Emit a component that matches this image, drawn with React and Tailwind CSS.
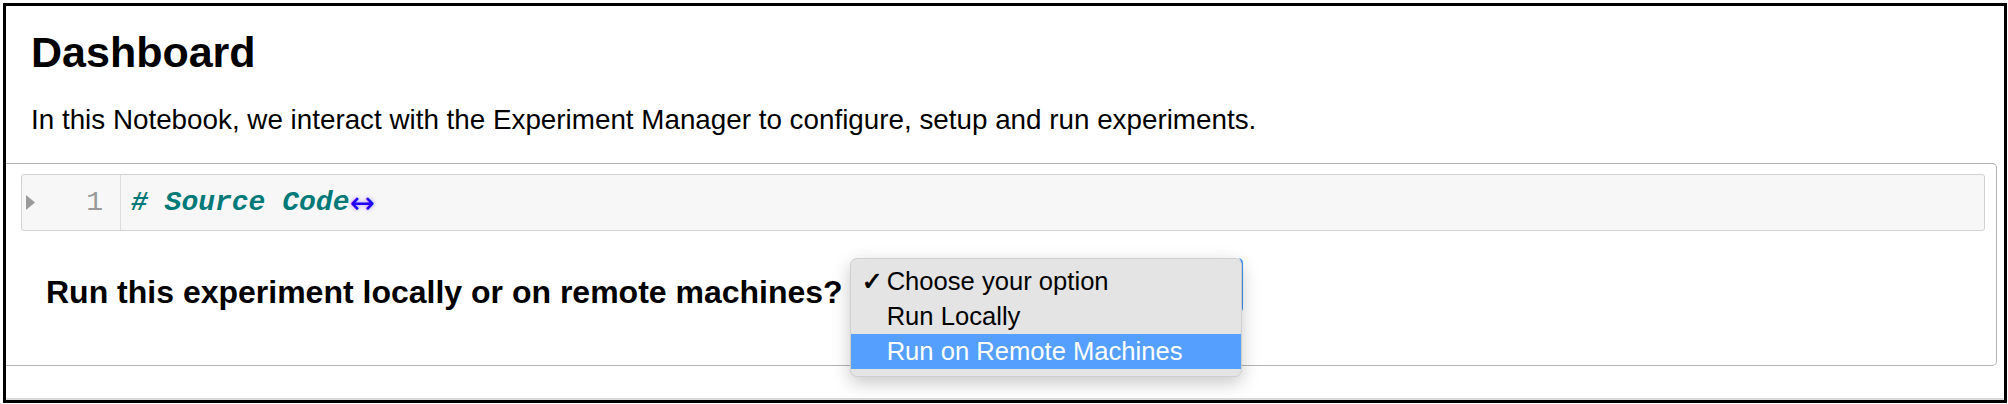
export default function App() {
  return (
    <div
      className="w-[2008px] h-[404px] bg-white pt-[3px] pl-[3px] pr-[1px] pb-[1px]"
      style={{ fontFamily: '"Liberation Sans", Arial, sans-serif' }}
    >
      <div className="h-[400px] border-[3px] border-black flex flex-col">
        <div className="flex-1 flex flex-col border-b-[2px] border-[#d9d9d9]">
          <h1 className="pl-[25px] pt-[20px] text-[43px] leading-[52px] font-bold text-black">
            Dashboard
          </h1>
          <p className="pl-[25px] mt-[24px] text-[27.8px] leading-[36px] text-black">
            In this Notebook, we interact with the Experiment Manager to configure, setup and run experiments.
          </p>
          <div className="mt-[25px] mr-[7px] border-t border-r border-b border-[#b4b4b4] rounded-r-[5px] pt-[10px] pr-[11px]">
            <div className="ml-[15px] h-[57px] flex bg-[#f7f7f7] border border-[#d2d2d2] rounded-[3px]">
              <div className="w-[99px] flex items-center border-r border-[#dddddd] pl-[4px] pr-[17px]">
                <svg width="9" height="15" viewBox="0 0 9 15" className="block">
                  <path d="M0 0 L9 7.5 L0 15 Z" fill="#9a9a9a" />
                </svg>
                <span
                  className="ml-auto text-[28px] text-[#999999]"
                  style={{ fontFamily: '"Liberation Mono", "Courier New", monospace' }}
                >
                  1
                </span>
              </div>
              <div className="flex items-center pl-[10px]">
                <span
                  className="text-[28px] italic font-bold text-[#007a78]"
                  style={{ fontFamily: '"Liberation Mono", "Courier New", monospace' }}
                >
                  # Source Code
                </span>
                <span
                  className="text-[30px] leading-none text-[#2200ff] [text-shadow:0_0_4px_#b48cff]"
                  style={{ fontFamily: '"DejaVu Sans", sans-serif' }}
                >
                  ↔
                </span>
              </div>
            </div>
            <div className="pt-[27px] pb-[52px] pl-[40px] flex items-start">
              <span className="mt-[14px] text-[32px] leading-[40px] font-bold text-black whitespace-nowrap">
                Run this experiment locally or on remote machines?
              </span>
              <div className="ml-[7px] relative w-[393px] h-[55px] rounded-[5px] border-r-[2px] border-[#3b8ff0]">
                <div className="absolute top-0 left-0 z-10 w-[392px] bg-[#e4e4e4] rounded-[7px] border border-[#cfcfcf] shadow-[0_6px_18px_rgba(0,0,0,0.22)] pt-[5px] pb-[7px]">
                  <div className="h-[35px] flex items-center text-[25.6px] text-black">
                    <span
                      className="w-[36px] pl-[11px] text-[25px] [-webkit-text-stroke:0.9px_black]"
                      style={{ fontFamily: '"DejaVu Sans", sans-serif' }}
                    >
                      ✓
                    </span>
                    <span>Choose your option</span>
                  </div>
                  <div className="h-[35px] flex items-center text-[25.6px] text-black">
                    <span className="w-[36px]"></span>
                    <span>Run Locally</span>
                  </div>
                  <div className="h-[35px] flex items-center text-[25.6px] text-white bg-[#55a0fe]">
                    <span className="w-[36px]"></span>
                    <span>Run on Remote Machines</span>
                  </div>
                </div>
              </div>
            </div>
          </div>
        </div>
      </div>
    </div>
  );
}
